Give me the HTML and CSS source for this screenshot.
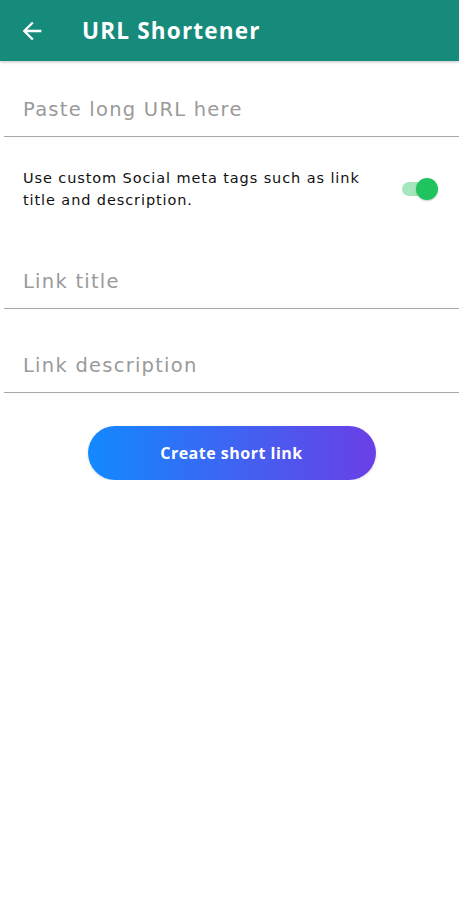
FILE: index.html
```html
<!DOCTYPE html>
<html>
<head>
<meta charset="utf-8">
<link rel="stylesheet" href="styles.css">
</head>
<body>
<header class="appbar">
  <svg class="back" width="28" height="28" viewBox="0 0 24 24"><path d="M20 11H7.83l5.59-5.59L12 4l-8 8 8 8 1.41-1.41L7.83 13H20v-2z" fill="#fff"/></svg>
  <h1 class="title">URL Shortener</h1>
</header>
<main class="content">
  <div class="field"><span class="placeholder">Paste long URL here</span></div>
  <div class="switch-row">
    <p class="switch-label">Use custom Social meta tags such as link title and description.</p>
    <div class="switch"><div class="track"></div><div class="thumb"></div></div>
  </div>
  <div class="field field-title"><span class="placeholder">Link title</span></div>
  <div class="field field-desc"><span class="placeholder">Link description</span></div>
  <div class="btn-wrap"><button class="btn">Create short link</button></div>
</main>
</body>
</html>
```
FILE: styles.css
```css
* { box-sizing: border-box; }
body { margin: 0; background: #fff; font-family: "DejaVu Sans", "Open Sans", sans-serif; }
.appbar {
  height: 61px; background: #178b7b; display: flex; align-items: center;
  padding-left: 18px; box-shadow: 0 1px 3px rgba(0,0,0,0.25);
}
.title { margin: 0 0 0 36px; color: #fff; font-family: "Open Sans", sans-serif; font-size: 22.5px; font-weight: 700; letter-spacing: 1.2px; }
.content { padding-left: 4px; }
.field { height: 76px; border-bottom: 1.5px solid #a8a8a8; display: flex; align-items: center; padding-left: 19px; padding-top: 21px; }
.field-title { height: 98px; padding-top: 44px; }
.field-desc { height: 84px; padding-top: 30px; }
.placeholder { color: #9a9a9a; font-size: 19.5px; letter-spacing: 1.25px; }
.switch-row { display: flex; align-items: center; padding: 30px 21px 0 19px; justify-content: space-between; }
.switch-label { margin: 0; font-size: 14.5px; line-height: 22px; color: #111; width: 362px; letter-spacing: 0.9px; }
.switch { position: relative; width: 36px; height: 24px; }
.track { position: absolute; left: 0; top: 5px; width: 34px; height: 14px; border-radius: 7px; background: #a5e6bd; }
.thumb { position: absolute; right: 0; top: 1px; width: 22px; height: 22px; border-radius: 50%; background: #20c45f; box-shadow: 0 1px 2px rgba(0,0,0,0.2); }
.btn-wrap { display: flex; justify-content: center; padding-top: 33px; }
.btn {
  width: 288px; height: 54px; border: none; border-radius: 27px;
  background: linear-gradient(90deg, #1289ff 0%, #6a3fe6 100%);
  color: #fff; font-family: "Open Sans", sans-serif; font-size: 16px; font-weight: 700; letter-spacing: 0.5px;
  box-shadow: 0 1px 3px rgba(0,0,0,0.15);
}
```
